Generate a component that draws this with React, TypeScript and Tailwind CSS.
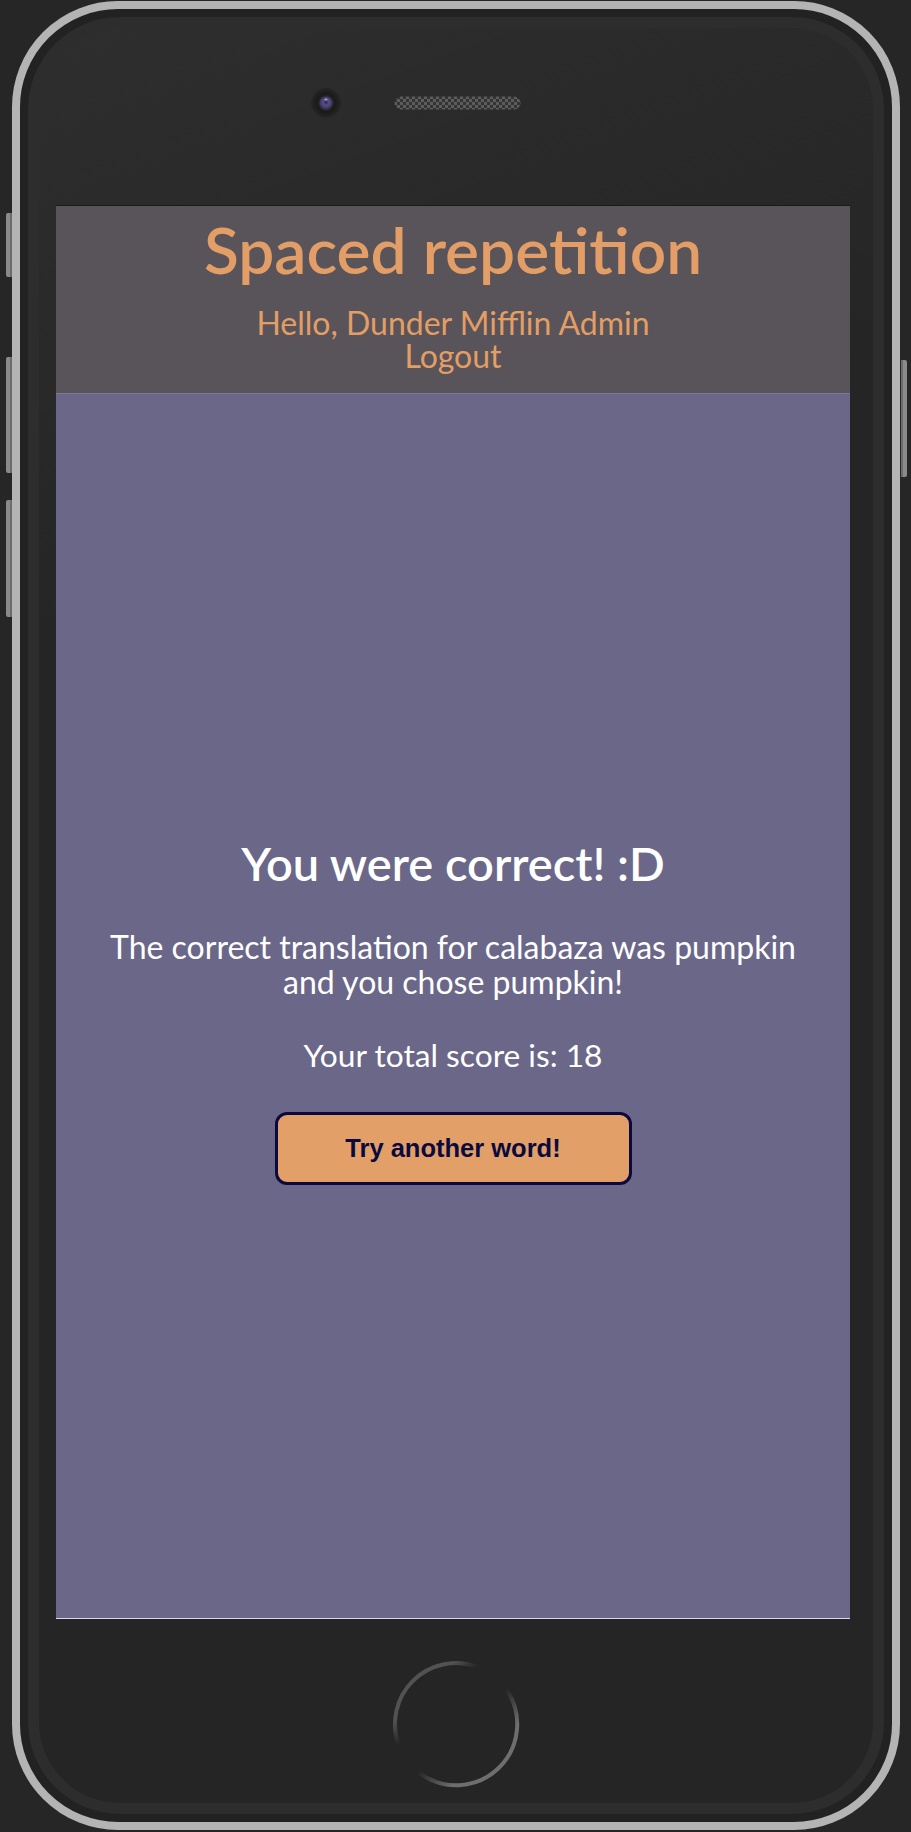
import React from "react";

const sans = { fontFamily: "Lato, 'Noto Sans', sans-serif" };

const Camera = () => (
  <svg width="32" height="32" viewBox="0 0 32 32">
    <defs>
      <radialGradient id="camRing" cx="50%" cy="50%" r="50%">
        <stop offset="60%" stopColor="#1a1a1a" />
        <stop offset="100%" stopColor="#262626" />
      </radialGradient>
      <radialGradient id="lens" cx="50%" cy="45%" r="50%">
        <stop offset="0%" stopColor="#2a2545" />
        <stop offset="45%" stopColor="#5a4f88" />
        <stop offset="100%" stopColor="#3a3358" />
      </radialGradient>
    </defs>
    <circle cx="16" cy="16" r="15" fill="url(#camRing)" />
    <circle cx="16" cy="16" r="8" fill="#252525" />
    <circle cx="16" cy="16" r="6.5" fill="url(#lens)" />
    <ellipse cx="16" cy="12.5" rx="1.6" ry="1" fill="#b9b0dd" opacity="0.8" />
  </svg>
);

const Speaker = () => (
  <svg width="127" height="14" viewBox="0 0 127 14">
    <defs>
      <pattern id="mesh" width="6" height="6" patternUnits="userSpaceOnUse">
        <rect width="6" height="6" fill="#343434" />
        <rect width="3" height="3" fill="#5c5c5c" />
        <rect x="3" y="3" width="3" height="3" fill="#5c5c5c" />
      </pattern>
    </defs>
    <rect x="0.5" y="0.5" width="126" height="13" rx="6.5" fill="url(#mesh)" />
  </svg>
);

const HomeButton = () => (
  <svg width="130" height="130" viewBox="0 0 130 130">
    <defs>
      <linearGradient id="homeBright" gradientUnits="userSpaceOnUse" x1="71.2" y1="71.5" x2="94.4" y2="96">
        <stop offset="0" stopColor="#6e6e6e" stopOpacity="0" />
        <stop offset="1" stopColor="#6e6e6e" />
      </linearGradient>
      <linearGradient id="homeDim" gradientUnits="userSpaceOnUse" x1="46.8" y1="46.8" x2="32.7" y2="32.7">
        <stop offset="0" stopColor="#525252" stopOpacity="0" />
        <stop offset="1" stopColor="#525252" />
      </linearGradient>
    </defs>
    <path d="M115 30 A61 61 0 0 1 27.4 113.1" fill="none" stroke="url(#homeBright)" strokeWidth="4" />
    <path d="M7.7 85.9 A61 61 0 0 1 85.9 7.7" fill="none" stroke="url(#homeDim)" strokeWidth="4" />
  </svg>
);

const SideKey = ({ className }: { className: string }) => (
  <div className={`w-[6px] bg-[#8a8a8a] border-[#6c6c6c] ${className}`} />
);

export default function App() {
  return (
    <div className="w-[911px] h-[1832px] bg-[#262626] flex pt-[1px] overflow-hidden">
      {/* left hardware keys */}
      <div className="w-[12px] flex flex-col">
        <SideKey className="ml-[6px] mt-[212px] h-[64px] rounded-l-[2px] border-r-2" />
        <SideKey className="ml-[6px] mt-[80px] h-[116px] rounded-l-[2px] border-r-2" />
        <SideKey className="ml-[6px] mt-[27px] h-[117px] rounded-l-[2px] border-r-2" />
      </div>

      {/* phone body */}
      <div className="w-[888px] h-[1829px] rounded-[106px] border-[8px] border-[#b4b4b4] bg-[#222222] p-[8px]">
        <div className="h-full rounded-[92px] border-[11px] border-[#2d2d2d] bg-linear-160 from-[#2e2e2e] to-[#252525] to-30% flex flex-col">
          {/* top: camera + speaker */}
          <div className="h-[177px] pt-[59px] pl-[271px] flex items-start gap-[52px]">
            <Camera />
            <div className="mt-[9px]">
              <Speaker />
            </div>
          </div>

          {/* screen */}
          <div className="ml-[17px] w-[794px] flex flex-col border-t border-[#1a1a1a] border-b border-b-[#dcd8e6]" style={sans}>
            <header className="h-[188px] bg-[#595459] flex flex-col items-center text-[#e29e66] pt-[12px] border-b border-[#7d7895]">
              <h1 className="text-[64px] leading-[64px] font-semibold">Spaced repetition</h1>
              <p className="mt-[24px] text-[32px] leading-[33px] text-center">
                Hello, Dunder Mifflin Admin
                <br />
                <a className="cursor-pointer">Logout</a>
              </p>
            </header>
            <main className="h-[1224px] bg-[#6b6789] flex flex-col items-center text-white pt-[444px]">
              <h2 className="text-[47px] leading-[50px] font-semibold">You were correct! :D</h2>
              <p className="mt-[41px] max-w-[712px] text-center text-[32px] leading-[35px]">
                The correct translation for calabaza was pumpkin and you chose pumpkin!
              </p>
              <p className="mt-[39px] text-[31.7px] leading-[35px]">Your total score is: 18</p>
              <button
                className="mt-[39px] w-[357px] h-[73px] rounded-[12px] border-[3px] border-[#0b0a3f] bg-[#e29f68] text-[#0b0a3f] text-[25.5px] font-bold"
                style={{ fontFamily: "'Liberation Sans', Arial, sans-serif" }}
              >
                Try another word!
              </button>
            </main>
          </div>

          {/* bottom: home button */}
          <div className="flex-1 flex justify-center pt-[40px]">
            <HomeButton />
          </div>
        </div>
      </div>

      {/* right hardware key */}
      <div className="w-[11px] flex flex-col">
        <SideKey className="ml-[1px] mt-[359px] h-[117px] rounded-r-[2px] border-l-2" />
      </div>
    </div>
  );
}
